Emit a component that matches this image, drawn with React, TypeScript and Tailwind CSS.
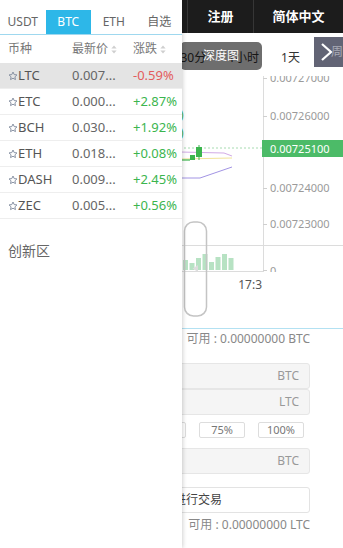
import React from "react";

const coins = [
  { sym: "LTC", price: "0.007...", chg: "-0.59%", active: true },
  { sym: "ETC", price: "0.000...", chg: "+2.87%" },
  { sym: "BCH", price: "0.030...", chg: "+1.92%" },
  { sym: "ETH", price: "0.018...", chg: "+0.08%" },
  { sym: "DASH", price: "0.009...", chg: "+2.45%" },
  { sym: "ZEC", price: "0.005...", chg: "+0.56%" },
];

const tabs = ["USDT", "BTC", "ETH", "自选"];

function Star() {
  return (
    <svg width="10" height="10" viewBox="0 0 24 24" className="shrink-0">
      <path
        d="M12 2.5l2.9 6.1 6.6.8-4.9 4.6 1.3 6.6L12 17.3l-5.9 3.3 1.3-6.6-4.9-4.6 6.6-.8z"
        fill="none"
        stroke="#7f8a9c"
        strokeWidth="2.2"
        strokeLinejoin="round"
      />
    </svg>
  );
}

function SortIcon() {
  return (
    <svg width="6" height="9" viewBox="0 0 6 9" className="ml-[3px]">
      <path d="M3 0.5L5.6 3.6H0.4z" fill="#cfcfcf" />
      <path d="M3 8.5L5.6 5.4H0.4z" fill="#cfcfcf" />
    </svg>
  );
}

function Drawer() {
  return (
    <div className="absolute left-0 top-0 z-20 h-full w-[182px] bg-white shadow-[1px_0_4px_rgba(0,0,0,0.18)]">
      {/* Tabs */}
      <div className="mt-[10px] flex h-[25px] border-b border-[#9fd8ef]">
        {tabs.map((t) => (
          <div
            key={t}
            className={`flex flex-1 items-center justify-center text-[12px] ${
              t === "BTC" ? "bg-[#2db7e8] text-white" : "text-[#666]"
            }`}
          >
            {t}
          </div>
        ))}
      </div>

      {/* Column header */}
      <div className="flex h-[28px] items-center text-[12px] text-[#777]">
        <div className="w-[72px] pl-[8px]">币种</div>
        <div className="flex w-[61px] items-center">
          最新价
          <SortIcon />
        </div>
        <div className="flex items-center">
          涨跌
          <SortIcon />
        </div>
      </div>

      {/* Rows */}
      <div>
        {coins.map((c) => (
          <div
            key={c.sym}
            className={`flex h-[26px] items-center border-b border-[#eeeeee] text-[13px] ${
              c.active ? "bg-[#e4e4e4]" : ""
            }`}
          >
            <div className="flex w-[72px] items-center pl-[8px] text-[#555]">
              <Star />
              <span>{c.sym}</span>
            </div>
            <div className="w-[61px] text-[#666]">{c.price}</div>
            <div className={c.chg.startsWith("-") ? "text-[#e35d5d]" : "text-[#3bb54e]"}>{c.chg}</div>
          </div>
        ))}
      </div>

      <div className="mt-[22px] pl-[8px] text-[14px] leading-[20px] text-[#666]">创新区</div>
    </div>
  );
}

function Chart() {
  const bars = [
    [183, 184],
    [189.5, 187],
    [196, 182],
    [202.5, 178],
    [209, 186],
    [215.5, 181],
    [222, 178],
    [228.5, 182],
  ];
  const labels: [string, number][] = [
    ["0.00727000", 6],
    ["0.00726000", 44],
    ["0.00724000", 116],
    ["0.00723000", 152],
  ];
  return (
    <svg width="343" height="252" viewBox="0 0 343 252" className="block">
      <defs>
        <clipPath id="axisClip">
          <rect x="0" y="0" width="343" height="196" />
        </clipPath>
      </defs>

      {/* indicator legend tails */}
      <text x="180" y="43" fontSize="12" fill="#3bb54e">)</text>
      <text x="180" y="61" fontSize="12" fill="#3bb54e">)</text>

      {/* lines */}
      <line x1="180" y1="72" x2="262" y2="72" stroke="#a6dbb0" strokeDasharray="2 2" />
      <polyline points="180,83 232,82" fill="none" stroke="#f2e49a" strokeWidth="1" />
      <polyline points="180,76 224,77 232,80" fill="none" stroke="#d2abe6" strokeWidth="1" />
      <polyline points="180,102 200,102 232,91" fill="none" stroke="#a294e4" strokeWidth="1" />
      <line x1="181" y1="84" x2="190" y2="84" stroke="#3bb54e" strokeWidth="1.2" />

      {/* candles */}
      <rect x="190" y="79" width="5" height="5" fill="#3bb54e" />
      <line x1="199" y1="69" x2="199" y2="84" stroke="#3bb54e" />
      <rect x="196" y="71" width="6" height="10" fill="#3bb54e" />

      {/* axes */}
      <line x1="263.5" y1="0" x2="263.5" y2="196" stroke="#dcdcdc" />
      <line x1="0" y1="169.5" x2="343" y2="169.5" stroke="#dcdcdc" />
      <line x1="0" y1="195.5" x2="263" y2="195.5" stroke="#dcdcdc" />
      {[2, 40, 112, 148, 194].map((y) => (
        <line key={y} x1="263" y1={y + 0.5} x2="267" y2={y + 0.5} stroke="#cfcfcf" />
      ))}

      {/* price labels */}
      <g clipPath="url(#axisClip)" fontFamily="Noto Sans, sans-serif" fontSize="11" fill="#9a9a9a">
        {labels.map(([t, y]) => (
          <text key={t} x="270" y={y}>
            {t}
          </text>
        ))}
        <text x="270" y="199">0</text>
      </g>
      <rect x="262" y="64" width="81" height="17" fill="#4cbb68" />
      <text x="270" y="76.5" fontFamily="Noto Sans, sans-serif" fontSize="11" fill="#ffffff">
        0.00725100
      </text>

      {/* volume */}
      {bars.map(([x, top]) => (
        <rect key={x} x={x} y={top} width="5" height={194 - top} fill="#b7e2c3" />
      ))}

      {/* time axis */}
      <text x="262" y="213" textAnchor="end" fontFamily="Noto Sans, sans-serif" fontSize="12" fill="#555">
        17:3
      </text>

      {/* zoom handle */}
      <rect x="184.5" y="146" width="22" height="94" rx="9" fill="none" stroke="#c4c4c4" strokeWidth="1.5" />
      <path d="M198 189L192.5 192.5L198 196z" fill="#dddddd" />
    </svg>
  );
}

function Page() {
  return (
    <div className="h-full w-full bg-white">
      {/* top bar */}
      <div className="flex h-[33px] justify-end bg-[#1c1c1c] text-[13px] font-bold text-white">
        <div className="flex w-[66px] items-center justify-center border-l border-[#363636]">注册</div>
        <div className="flex w-[90px] items-center justify-center border-l border-[#363636]">简体中文</div>
      </div>

      {/* periods */}
      <div className="relative h-[43px]">
        <div className="flex justify-end gap-[22px] pr-[9px] pt-[19px] text-[12px] leading-[12px] text-[#333]">
          <span>1分</span>
          <span>5分</span>
          <span>30分</span>
          <span>1小时</span>
          <span>1天</span>
          <span>周</span>
        </div>
        <div className="absolute left-[180px] top-[9px] flex h-[28px] w-[82px] items-center justify-center rounded-[5px] bg-black/[0.57] text-[12px] text-white">
          深度图
        </div>
        <div className="absolute right-0 top-[4px] flex h-[30px] w-[29px] items-center overflow-hidden bg-[#626475]">
          <svg width="14" height="20" viewBox="0 0 14 20" className="ml-[6px] shrink-0">
            <path d="M2 2L11 10L2 18" fill="none" stroke="#ffffff" strokeWidth="2.2" />
          </svg>
          <span className="ml-[-3px] text-[12px] text-[#a9abb6]">周</span>
        </div>
      </div>

      <Chart />

      {/* trade form */}
      <div className="flex flex-col border-t border-[#b3e1f2] pl-[10px] pr-[33px] pt-[3px]">
        <div className="text-right text-[12px] leading-[14px] text-[#888]">可用 : 0.00000000 BTC</div>
        <div className="mt-[17px] flex h-[26px] items-center justify-end rounded-[3px] border border-[#e6e6e6] bg-[#f5f5f5] pr-[10px] text-[12px] text-[#999]">
          BTC
        </div>
        <div className="flex h-[26px] items-center justify-end rounded-[3px] border border-[#e6e6e6] bg-[#f5f5f5] pr-[10px] text-[12px] text-[#999]">
          LTC
        </div>
        <div className="mt-[7px] flex justify-end gap-[13px] pr-[6px]">
          {["25%", "50%", "75%", "100%"].map((p) => (
            <div
              key={p}
              className="flex h-[16px] w-[46px] items-center justify-center rounded-[2px] border border-[#dddddd] text-[11px] text-[#777]"
            >
              {p}
            </div>
          ))}
        </div>
        <div className="mt-[10px] flex h-[26px] items-center justify-end rounded-[3px] border border-[#e6e6e6] bg-[#f5f5f5] pr-[10px] text-[12px] text-[#999]">
          BTC
        </div>
        <div className="mt-[13px] flex h-[26px] items-center rounded-[3px] border border-[#e3e3e3] bg-white pl-[127px] text-[12px] text-[#444]">
          登录后进行交易
        </div>
        <div className="mt-[5px] text-right text-[12px] leading-[14px] text-[#888]">可用 : 0.00000000 LTC</div>
      </div>
    </div>
  );
}

export default function App() {
  return (
    <div className="relative h-[548px] w-[343px] overflow-hidden bg-white font-[Noto_Sans,Noto_Sans_CJK_SC,sans-serif]">
      <Page />
      <Drawer />
    </div>
  );
}
